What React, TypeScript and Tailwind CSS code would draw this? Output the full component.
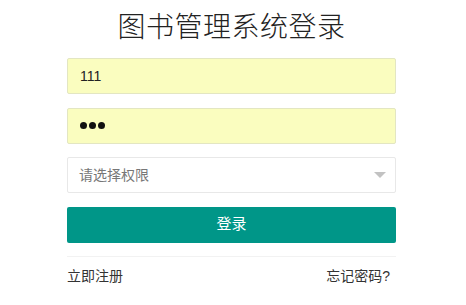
import React from 'react';

const font = { fontFamily: '"Liberation Sans", "Noto Sans CJK SC", sans-serif' };

const App: React.FC = () => {
  return (
    <div className="w-[466px] h-[305px] bg-white overflow-hidden" style={font}>
      <div className="ml-[67px] w-[329px] pt-[9px]">
        <h1 className="text-center text-[28px] leading-[38px] font-light text-[#222] tracking-[0.5px]">
          图书管理系统登录
        </h1>

        <div className="mt-[11px] flex flex-col gap-[13.5px]">
          <div className="h-[36px] flex items-center px-[12px] bg-[#fafdbf] border border-[#e3e6c2] rounded-[2px] text-[14px] text-[#222]">
            111
          </div>
          <div className="h-[36px] flex items-center px-[12px] bg-[#fafdbf] border border-[#e3e6c2] rounded-[2px]">
            <span className="flex gap-[2px]">
              <span className="w-[7px] h-[7px] rounded-full bg-[#111]" />
              <span className="w-[7px] h-[7px] rounded-full bg-[#111]" />
              <span className="w-[7px] h-[7px] rounded-full bg-[#111]" />
            </span>
          </div>
          <div className="h-[36px] flex items-center justify-between pl-[11px] pr-[9px] bg-white border border-[#e8e8e8] rounded-[2px] text-[14px] text-[#777]">
            <span>请选择权限</span>
            <span className="w-0 h-0 border-l-[6px] border-r-[6px] border-t-[6px] border-l-transparent border-r-transparent border-t-[#c2c2c2]" />
          </div>
          <button className="h-[36px] bg-[#009688] rounded-[2px] text-white text-[15px] flex items-center justify-center">
            登录
          </button>
        </div>

        <div className="mt-[13px] border-t border-[#f2f2f2] pt-[9px] flex justify-between text-[14px] text-[#333]">
          <span>立即注册</span>
          <span className="pr-[6px]">忘记密码?</span>
        </div>
      </div>
    </div>
  );
};

export default App;
